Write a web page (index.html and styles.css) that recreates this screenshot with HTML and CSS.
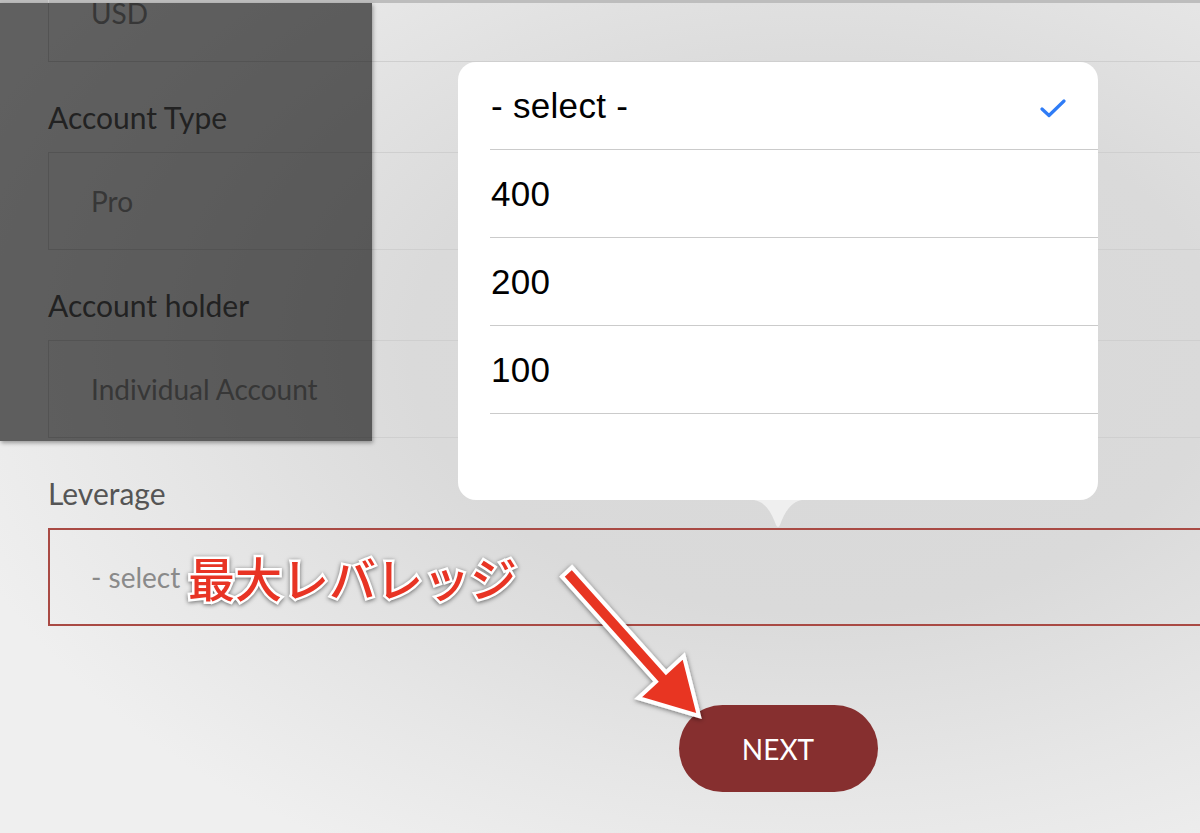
FILE: index.html
```html
<!DOCTYPE html>
<html lang="en">
<head>
	<meta charset="UTF-8">
	<title>Open Account - Leverage</title>
	<link rel="stylesheet" href="styles.css">
</head>
<body>
	<div class="top-edge"></div>

	<form class="account-form">
		<div class="field field--first">
			<div class="field-input">USD</div>
		</div>
		<div class="field">
			<label class="field-label">Account Type</label>
			<div class="field-input">Pro</div>
		</div>
		<div class="field">
			<label class="field-label">Account holder</label>
			<div class="field-input">Individual Account</div>
		</div>
		<div class="field">
			<label class="field-label">Leverage</label>
			<div class="field-input field-input--active">- select -</div>
		</div>
		<div class="form-actions">
			<button type="button" class="next-btn">NEXT</button>
		</div>
	</form>

	<!-- highlight mask over the already filled fields -->
	<div class="mask"></div>

	<!-- native select popover -->
	<div class="picker" role="listbox">
		<div class="picker-option is-selected">
			<span>- select -</span>
			<svg class="picker-check" width="26" height="20" viewBox="0 0 26 20">
				<path d="M2 11 L9 17.5 L24 3" fill="none" stroke="#2f7cf6" stroke-width="3.2" stroke-linecap="round" stroke-linejoin="round"/>
			</svg>
		</div>
		<div class="picker-option"><span>400</span></div>
		<div class="picker-option"><span>200</span></div>
		<div class="picker-option"><span>100</span></div>
		<div class="picker-option picker-option--empty"></div>
	</div>
	<svg class="picker-tail" width="48" height="28" viewBox="0 0 48 28">
		<path d="M0 0 H48 C36 2 30 14 26 25 Q24 29 22 25 C18 14 12 2 0 0 Z" fill="#efefef"/>
	</svg>

	<!-- annotation -->
	<div class="note">最大レバレッジ</div>
	<svg class="note-arrow" width="1200" height="833" viewBox="0 0 1200 833">
		<defs>
			<filter id="arrow-shadow" x="-20%" y="-20%" width="140%" height="140%">
				<feDropShadow dx="0" dy="1" stdDeviation="2.5" flood-color="#000" flood-opacity="0.55"/>
			</filter>
		</defs>
		<polygon points="562,576.6 656,681.6 638.2,698 699,716 683.8,656 666,672.4 572,567.4"
			fill="#e83424" stroke="#fff" stroke-width="4" stroke-linejoin="miter" filter="url(#arrow-shadow)"/>
	</svg>
</body>
</html>
```
FILE: styles.css
```css
/* Base */
:root {
	--color-text: #555;
	--color-muted: #8a8a8a;
	--color-line: #cfcfcf;
	--color-accent: #a94a44;
	--color-button: #862f2f;
	--color-note: #e83424;
}

html,
body {
	margin: 0;
	height: 100%;
}

body {
	position: relative;
	overflow: hidden;
	font-family: Lato, "Open Sans", sans-serif;
	background: radial-gradient(ellipse 75% 70% at 68% 42%, #d8d8d8 0%, #dadada 45%, #e6e6e6 75%, #efefef 100%);
}

.top-edge {
	height: 3px;
	background: #bdbdbd;
}

/* Form */
.account-form {
	margin-top: -39px;
	padding-left: 48px;
}

.field-label {
	display: block;
	margin: 39px 0 0;
	height: 51px;
	line-height: 32px;
	font-size: 30px;
	color: var(--color-text);
}

.field-input {
	box-sizing: border-box;
	width: 1200px;
	height: 98px;
	padding-left: 42px;
	display: flex;
	align-items: center;
	font-size: 28px;
	color: var(--color-muted);
	border: 1px solid var(--color-line);
	border-right: 0;
}

.field-input--active {
	border: 2px solid var(--color-accent);
	border-right: 0;
	padding-left: 41px;
}

.form-actions {
	display: flex;
	justify-content: center;
	padding: 79px 0 0 0;
	width: 1460px;
}

.next-btn {
	width: 199px;
	height: 87px;
	border: 0;
	border-radius: 44px;
	background: var(--color-button);
	color: #fff;
	font-family: Lato, sans-serif;
	font-size: 28px;
}

/* Mask */
.mask {
	position: absolute;
	left: 0;
	top: 3px;
	width: 372px;
	height: 438px;
	background: rgba(0, 0, 0, 0.6);
	box-shadow: 1px 2px 4px rgba(0, 0, 0, 0.35);
}

/* Picker popover */
.picker {
	position: absolute;
	left: 458px;
	top: 62px;
	width: 640px;
	height: 438px;
	background: #fff;
	border-radius: 18px;
	overflow: hidden;
	font-family: "Liberation Sans", Arial, sans-serif;
}

.picker-option {
	display: flex;
	align-items: center;
	justify-content: space-between;
	height: 87px;
	margin-left: 32px;
	padding: 0 32px 0 1px;
	border-bottom: 1px solid #cbcbcb;
	font-size: 35px;
	letter-spacing: 0.3px;
	color: #000;
}

.picker-option--empty {
	border-bottom: 0;
}

.picker-check {
	margin-top: 4px;
}

.picker-tail {
	position: absolute;
	left: 754px;
	top: 500px;
}

/* Annotation */
.note {
	position: absolute;
	left: 188px;
	top: 545px;
	font-family: "Noto Sans CJK JP", sans-serif;
	font-weight: 500;
	font-size: 47px;
	line-height: 64px;
	color: var(--color-note);
	-webkit-text-stroke: 5px #fff;
	paint-order: stroke fill;
	filter: drop-shadow(0 1px 2px rgba(0, 0, 0, 0.55));
}

.note-arrow {
	position: absolute;
	left: 0;
	top: 0;
	pointer-events: none;
}
```
